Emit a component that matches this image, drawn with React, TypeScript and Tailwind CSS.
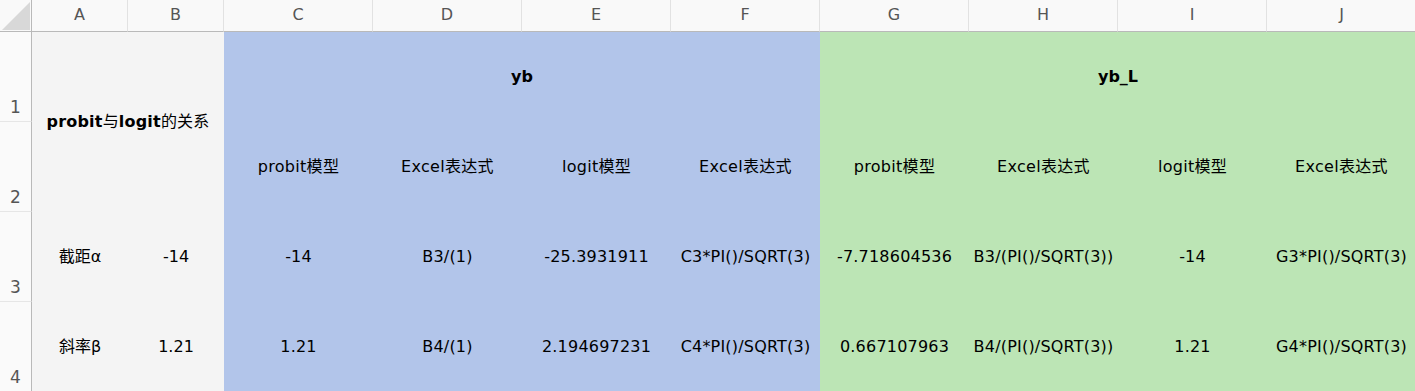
const font = { fontFamily: '"DejaVu Sans", "Noto Sans CJK SC", sans-serif' };

const cols = ["A", "B", "C", "D", "E", "F", "G", "H", "I", "J"];

type Row = { label: string; a: string; b: string; vals: string[] };

const rows: Row[] = [
  {
    label: "3",
    a: "截距α",
    b: "-14",
    vals: ["-14", "B3/(1)", "-25.3931911", "C3*PI()/SQRT(3)", "-7.718604536", "B3/(PI()/SQRT(3))", "-14", "G3*PI()/SQRT(3)"],
  },
  {
    label: "4",
    a: "斜率β",
    b: "1.21",
    vals: ["1.21", "B4/(1)", "2.194697231", "C4*PI()/SQRT(3)", "0.667107963", "B4/(PI()/SQRT(3))", "1.21", "G4*PI()/SQRT(3)"],
  },
];

const heads = ["probit模型", "Excel表达式", "logit模型", "Excel表达式"];

function bg(i: number) {
  return i < 4 ? "bg-[#b2c5ea]" : "bg-[#bce5b5]";
}

const rowHead =
  "flex items-end justify-center pb-[1px] bg-[#fafafa] border-r border-b border-[#b9b9b9] border-b-[#e6e6e6] text-[17px] text-[#555]";

export default function App() {
  return (
    <div className="w-[1415px] h-[391px] overflow-hidden bg-white text-[16px] text-black" style={font}>
      <div className="grid grid-cols-[32px_96px_96px_repeat(8,149px)] grid-rows-[32px_90px_90px_90px_90px]">
        {/* corner */}
        <div className="relative bg-[#f9f9f9] border-r border-b border-[#b9b9b9]">
          <svg className="absolute left-[2px] top-[2px]" width="28" height="28" viewBox="0 0 28 28">
            <polygon points="28,0 28,28 0,28" fill="#d8d8d8" />
          </svg>
        </div>
        {cols.map((c, i) => (
          <div
            key={c}
            className={`flex items-center justify-center pb-[2px] bg-[#f9f9f9] border-b border-[#b9b9b9] text-[16px] text-[#555] ${i < cols.length - 1 ? "border-r border-r-[#e2e2e2]" : ""}`}
          >
            {c}
          </div>
        ))}

        {/* row 1 */}
        <div className={rowHead}>1</div>
        <div className="col-span-2 row-span-2 flex items-center justify-center bg-[#f4f4f4] whitespace-nowrap tracking-[0.2px]">
          <span>
            <b>probit</b>与<b>logit</b>的关系
          </span>
        </div>
        <div className={`col-span-4 flex items-center justify-center font-bold ${bg(0)}`}>yb</div>
        <div className={`col-span-4 flex items-center justify-center font-bold ${bg(4)}`}>yb_L</div>

        {/* row 2 */}
        <div className={rowHead}>2</div>
        {heads.concat(heads).map((h, i) => (
          <div key={i} className={`flex items-center justify-center whitespace-nowrap tracking-[0.3px] ${bg(i)}`}>
            {h}
          </div>
        ))}

        {rows.map((r) => (
          <div key={r.label} className="contents">
            <div className={rowHead}>{r.label}</div>
            <div className="flex items-center justify-center bg-[#f4f4f4]">{r.a}</div>
            <div className="flex items-center justify-center bg-[#f4f4f4]">{r.b}</div>
            {r.vals.map((v, i) => (
              <div key={i} className={`flex items-center justify-center whitespace-nowrap tracking-[0.2px] ${bg(i)}`}>
                {v}
              </div>
            ))}
          </div>
        ))}
      </div>
    </div>
  );
}
